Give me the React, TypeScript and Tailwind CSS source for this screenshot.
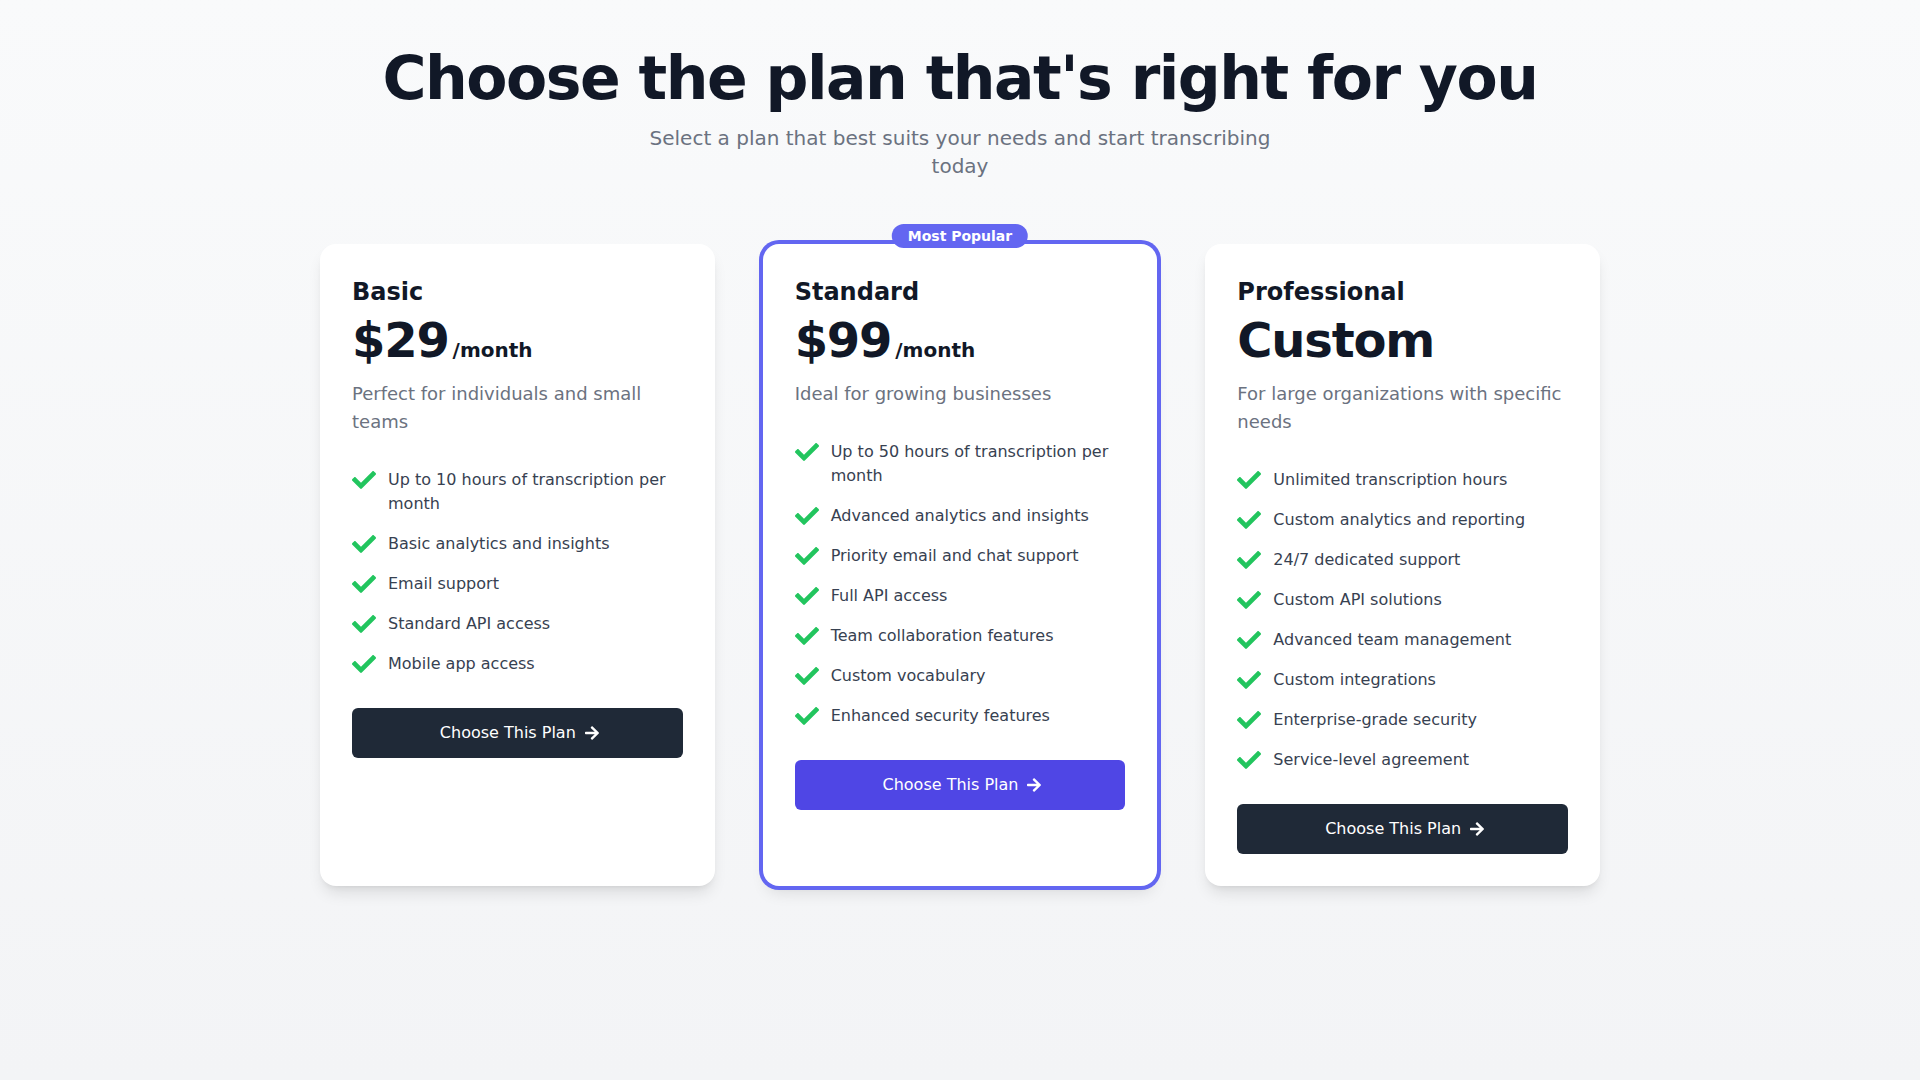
import { FaCheck, FaArrowRight } from "react-icons/fa";

type Plan = {
  name: string;
  price: string;
  period?: string;
  description: string;
  features: string[];
  popular?: boolean;
};

const plans: Plan[] = [
  {
    name: "Basic",
    price: "$29",
    period: "/month",
    description: "Perfect for individuals and small teams",
    features: [
      "Up to 10 hours of transcription per month",
      "Basic analytics and insights",
      "Email support",
      "Standard API access",
      "Mobile app access",
    ],
  },
  {
    name: "Standard",
    price: "$99",
    period: "/month",
    description: "Ideal for growing businesses",
    features: [
      "Up to 50 hours of transcription per month",
      "Advanced analytics and insights",
      "Priority email and chat support",
      "Full API access",
      "Team collaboration features",
      "Custom vocabulary",
      "Enhanced security features",
    ],
    popular: true,
  },
  {
    name: "Professional",
    price: "Custom",
    description: "For large organizations with specific needs",
    features: [
      "Unlimited transcription hours",
      "Custom analytics and reporting",
      "24/7 dedicated support",
      "Custom API solutions",
      "Advanced team management",
      "Custom integrations",
      "Enterprise-grade security",
      "Service-level agreement",
    ],
  },
];

function PlanCard({ plan }: { plan: Plan }) {
  return (
    <div
      className={
        plan.popular
          ? "relative rounded-2xl bg-white p-8 shadow-lg ring-4 ring-[#6366f1]"
          : "relative rounded-2xl bg-white p-8 shadow-lg"
      }
    >
      {plan.popular && (
        <span className="absolute -top-5 left-1/2 -translate-x-1/2 rounded-full bg-[#6366f1] px-4 py-0.5 text-sm font-bold text-white">
          Most Popular
        </span>
      )}
      <h3 className="text-2xl font-bold text-[#111827]">{plan.name}</h3>
      <div className="mt-2 flex items-baseline">
        <span className="text-5xl font-bold tracking-tight text-[#111827]">{plan.price}</span>
        {plan.period && (
          <span className="ml-1 text-xl font-bold text-[#111827]">{plan.period}</span>
        )}
      </div>
      <p className="mt-4 text-lg text-[#6b7280]">{plan.description}</p>

      <ul className="mt-8 space-y-4">
        {plan.features.map((feature) => (
          <li key={feature} className="flex items-start">
            <FaCheck className="h-6 w-6 flex-shrink-0 text-[#22c55e]" />
            <span className="ml-3 text-base text-[#374151]">{feature}</span>
          </li>
        ))}
      </ul>

      <button
        className={
          plan.popular
            ? "mt-8 flex w-full items-center justify-center rounded-md border border-transparent bg-[#4f46e5] py-3 pl-[9px] pr-1 text-base text-white"
            : "mt-8 flex w-full items-center justify-center rounded-md border border-transparent bg-[#1f2937] py-3 pl-[9px] pr-1 text-base text-white"
        }
      >
        Choose This Plan
        <FaArrowRight className="ml-2 h-4 w-4" />
      </button>
    </div>
  );
}

export default function App() {
  return (
    <div className="min-h-screen bg-gradient-to-b from-[#f9fafb] to-[#f3f4f6] px-4 py-12 font-['DejaVu_Sans',sans-serif]">
      <div className="mx-auto max-w-7xl">
        <div className="text-center">
          <h1 className="text-6xl font-bold tracking-tight text-[#111827]">
            Choose the plan that's right for you
          </h1>
          <p className="mx-auto mt-4 max-w-2xl text-xl text-[#6b7280]">
            Select a plan that best suits your needs and start transcribing today
          </p>
        </div>

        <div className="mt-16 grid grid-cols-3 gap-12">
          {plans.map((plan) => (
            <PlanCard key={plan.name} plan={plan} />
          ))}
        </div>
      </div>
    </div>
  );
}
